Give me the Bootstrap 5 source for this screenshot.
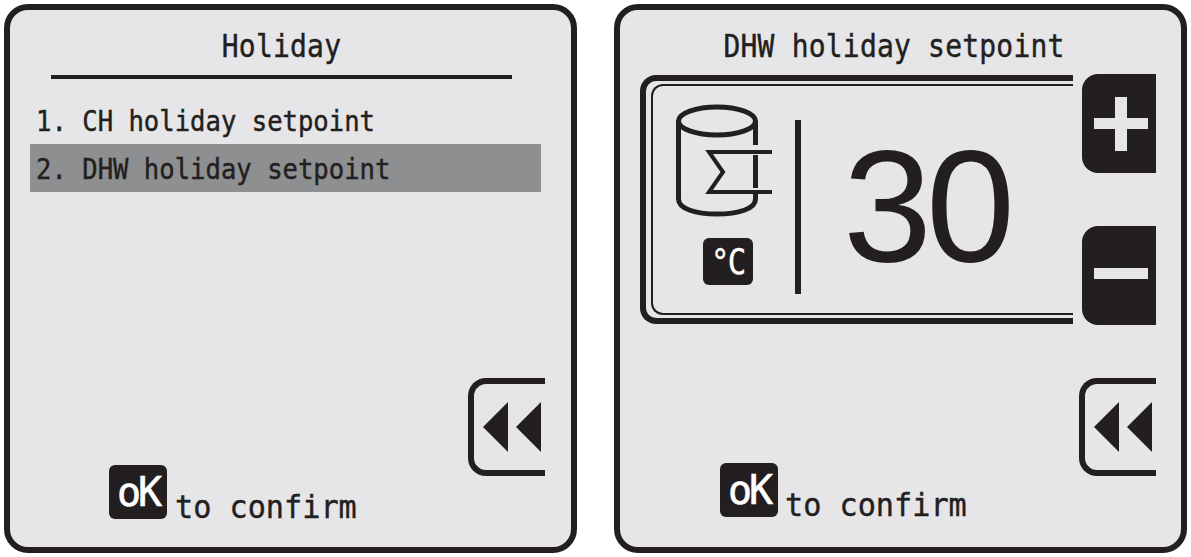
<!DOCTYPE html>
<html lang="en">
<head>
<meta charset="utf-8">
<title>Holiday</title>
<link href="https://cdn.jsdelivr.net/npm/bootstrap@5.3.0/dist/css/bootstrap.min.css" rel="stylesheet">
<style>
html,body{height:100%;background:#fff;overflow:hidden}
.screens{padding:4px 5px 4px 4px;gap:37px;height:557px;font-family:"DejaVu Sans Mono","Liberation Mono",monospace;color:#231f20}
.lcd{width:573px;height:549px;flex:none;border:6px solid #231f20;border-radius:24px;background:#e6e6e8;padding:0}
.lcd-title{font-size:28px;line-height:34px;letter-spacing:.2px;text-align:center;margin:20px 0 0;font-weight:400;-webkit-text-stroke:.4px #231f20;transform:scaleY(1.12)}
.menu-head{margin-left:41px;width:461px}
.menu-rule{height:4px;background:#231f20;margin-top:11px}
.menu-list{margin:17px 30px 0 20px;font-size:25.6px;-webkit-text-stroke:.4px #231f20}
.menu-row{height:48px;line-height:48px;padding-left:6px;white-space:pre}
.menu-row.on{background:#8e8f91}
.row-text{display:inline-block;transform:scaleY(1.12) translateY(1px)}
.foot{margin-top:auto;padding-bottom:28px}
.back-wrap{padding-right:26px}
.back-key{width:77px;height:98px;border:6px solid #231f20;border-right:0;border-radius:18px 0 0 18px;display:flex;align-items:center;justify-content:flex-end;padding-right:3px}
.ok-row{margin-top:-11px;padding-left:99px;align-items:flex-end}
.ok-key{width:58px;height:54px;background:#231f20;color:#fff;border-radius:6px;font-size:40px;letter-spacing:-3px;line-height:54px;text-align:center;-webkit-text-stroke:.6px #fff}
.ok-text{font-size:30.2px;line-height:34px;margin-left:8px;margin-bottom:-6px;-webkit-text-stroke:.4px #231f20;transform:scaleY(1.05)}
.set-title{width:548px}
.set-body{margin-top:10px;padding-left:20px;gap:9px}
.frame{width:433px;height:249px;margin-top:1px;border:6px solid #231f20;border-right:0;border-radius:16px 0 0 16px;padding:3px 0 3px 5px}
.frame-in{height:100%;border:2px solid #231f20;border-right:0;border-radius:12px 0 0 12px;padding-left:23px;align-items:flex-start}
.tank-col{width:90px;padding-top:17px}
.unit{width:50px;height:47px;background:#231f20;color:#fff;border-radius:6px;margin:19px 0 0 27px;overflow:hidden;text-align:center}
.unit-text{display:inline-block;font-size:36px;line-height:47px;letter-spacing:-2px;transform:scaleX(.85);-webkit-text-stroke:.4px #fff}
.divider{width:6px;height:174px;background:#231f20;margin-left:29px;margin-top:34px}
.value{font-family:"Liberation Sans",sans-serif;font-size:160px;line-height:1;margin:40px 0 0 42px;letter-spacing:-6px}
.side-keys{gap:53px}
.pm-key{width:74px;height:99px;background:#231f20;border-radius:16px 0 0 16px;padding-left:4px}
.minus-key{padding-bottom:4px}
.set-back{padding-right:25px}
.set-foot{padding-bottom:30px}
.set-foot .ok-row{padding-left:100px;margin-top:-13px}
.set-foot .ok-text{margin-left:7px}
</style>
</head>
<body>
<div class="screens d-flex">
  <section class="lcd d-flex flex-column">
    <div class="menu-head">
      <h1 class="lcd-title">Holiday</h1>
      <div class="menu-rule"></div>
    </div>
    <div class="menu-list">
      <div class="menu-row"><span class="row-text">1. CH holiday setpoint</span></div>
      <div class="menu-row on"><span class="row-text">2. DHW holiday setpoint</span></div>
    </div>
    <div class="foot">
      <div class="back-wrap d-flex justify-content-end">
        <div class="back-key"><svg width="59" height="50" viewBox="0 0 59 50"><path fill="#231f20" d="M0 25 25 0V50ZM33 25 58 0V50Z"/></svg></div>
      </div>
      <div class="ok-row d-flex">
        <div class="ok-key">oK</div>
        <div class="ok-text">to confirm</div>
      </div>
    </div>
  </section>
  <section class="lcd d-flex flex-column">
    <h1 class="lcd-title set-title">DHW holiday setpoint</h1>
    <div class="set-body d-flex">
      <div class="frame">
        <div class="frame-in d-flex">
          <div class="tank-col">
            <svg width="100" height="116" viewBox="0 0 100 116" class="d-block" fill="none" stroke="#231f20" stroke-width="5">
              <ellipse cx="41" cy="18" rx="38.500" ry="14"/>
              <path d="M2.500 18V96C2.500 106 20 111 41 111S79.500 106 79.500 96V91M79.500 18V42M79.500 52V85"/>
              <path stroke-width="4" d="M96 49H33L47 69 33 89H96"/>
            </svg>
            <div class="unit"><span class="unit-text">°C</span></div>
          </div>
          <div class="divider"></div>
          <div class="value">30</div>
        </div>
      </div>
      <div class="side-keys d-flex flex-column">
        <div class="pm-key d-flex align-items-center justify-content-center"><svg width="54" height="54" viewBox="0 0 54 54"><path fill="#e6e6e8" d="M21 0H33V21H54V32H33V54H21V32H0V21H21Z"/></svg></div>
        <div class="pm-key minus-key d-flex align-items-center justify-content-center"><svg width="54" height="11" viewBox="0 0 54 11"><path fill="#e6e6e8" d="M0 0H54V11H0Z"/></svg></div>
      </div>
    </div>
    <div class="foot set-foot">
      <div class="back-wrap set-back d-flex justify-content-end">
        <div class="back-key"><svg width="59" height="50" viewBox="0 0 59 50"><path fill="#231f20" d="M0 25 25 0V50ZM33 25 58 0V50Z"/></svg></div>
      </div>
      <div class="ok-row d-flex">
        <div class="ok-key">oK</div>
        <div class="ok-text">to confirm</div>
      </div>
    </div>
  </section>
</div>
<script src="https://cdn.jsdelivr.net/npm/bootstrap@5.3.0/dist/js/bootstrap.bundle.min.js"></script>
</body>
</html>
